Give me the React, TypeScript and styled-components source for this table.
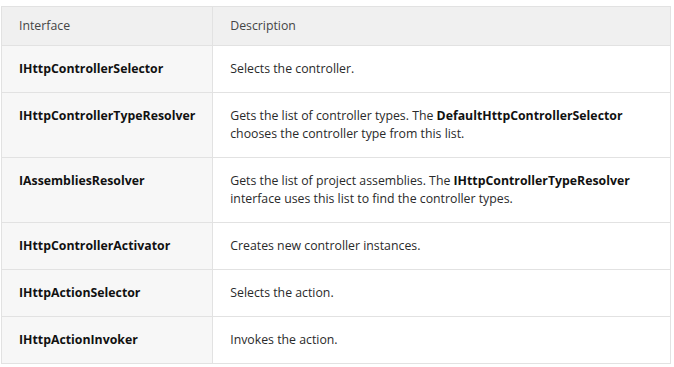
import React from "react";
import styled, { createGlobalStyle } from "styled-components";

interface Row {
  name: string;
  desc: React.ReactNode;
}

const rows: Array<Row> = [
  { name: "IHttpControllerSelector", desc: "Selects the controller." },
  {
    name: "IHttpControllerTypeResolver",
    desc: (
      <>
        Gets the list of controller types. The <b>DefaultHttpControllerSelector</b> chooses the controller type from this list.
      </>
    ),
  },
  {
    name: "IAssembliesResolver",
    desc: (
      <>
        Gets the list of project assemblies. The <b>IHttpControllerTypeResolver</b> interface uses this list to find the controller types.
      </>
    ),
  },
  { name: "IHttpControllerActivator", desc: "Creates new controller instances." },
  { name: "IHttpActionSelector", desc: "Selects the action." },
  { name: "IHttpActionInvoker", desc: "Invokes the action." },
];

const App = () => {
  return (
    <>
      <GlobalStyle />
      <Table>
        <thead>
          <tr>
            <HeadCell $first>Interface</HeadCell>
            <HeadCell>Description</HeadCell>
          </tr>
        </thead>
        <tbody>
          {rows.map((row) => (
            <tr key={row.name}>
              <NameCell>{row.name}</NameCell>
              <DescCell>{row.desc}</DescCell>
            </tr>
          ))}
        </tbody>
      </Table>
    </>
  );
};

export default App;

const GlobalStyle = createGlobalStyle`
  body {
    margin: 0;
    background: #fff;
    font-family: "Open Sans", "Noto Sans", sans-serif;
  }
`;

const Table = styled.table`
  border-collapse: collapse;
  width: 670px;
  margin: 6px 0 0 1px;
  font-size: 12.3px;
  line-height: 18px;
  color: #2a2a2a;

  b {
    font-weight: 700;
    color: #111;
  }
`;

const HeadCell = styled.th<{ $first?: boolean }>`
  box-sizing: border-box;
  width: ${({ $first }) => ($first ? "211px" : "auto")};
  text-align: left;
  font-weight: 400;
  color: #454545;
  background: #f0f0f0;
  border: 1px solid #e2e2e2;
  padding: 10px 17px;
`;

const NameCell = styled.td`
  background: #f7f7f7;
  border: 1px solid #e2e2e2;
  padding: 14px 17px;
  font-weight: 700;
  color: #111;
  vertical-align: top;
`;

const DescCell = styled.td`
  background: #fff;
  border: 1px solid #e2e2e2;
  padding: 14px 17px;
  vertical-align: top;
`;
